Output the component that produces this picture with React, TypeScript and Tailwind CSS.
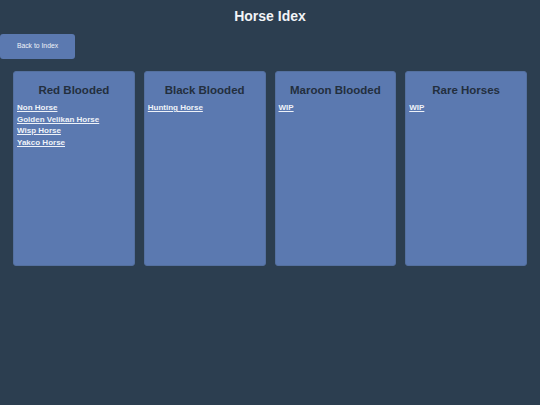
import React from 'react';

const groups = [
  { title: 'Red Blooded', links: ['Non Horse', 'Golden Velikan Horse', 'Wisp Horse', 'Yakco Horse'] },
  { title: 'Black Blooded', links: ['Hunting Horse'] },
  { title: 'Maroon Blooded', links: ['WIP'] },
  { title: 'Rare Horses', links: ['WIP'] },
];

export default function App() {
  return (
    <div className="min-h-[405px] w-full bg-[#2c3e50] font-['Liberation_Sans',Arial,sans-serif]">
      <h1 className="pt-[8px] text-center text-[14px] font-bold leading-[17px] text-[#f2f4f7]">Horse Idex</h1>

      <button className="mt-[9px] block h-[25px] w-[75px] rounded-[3px] bg-[#5b79b0] text-[6.8px] text-[#eef2f8]">
        Back to Index
      </button>

      {/* Categories */}
      <div className="mt-[12px] flex gap-[9px] px-[13px]">
        {groups.map((g) => (
          <section
            key={g.title}
            className="h-[195px] flex-1 rounded-[3px] border border-[#54709f] bg-[#5b79b0] px-[3px]"
          >
            <h2 className="pt-[11px] text-center text-[11.5px] font-bold leading-[14px] text-[#232f3e]">
              {g.title}
            </h2>
            <ul className="mt-[5px] flex flex-col">
              {g.links.map((l) => (
                <li key={l} className="text-[8px] leading-[11.5px]">
                  <a href="#" className="font-bold text-[#eef2f8] underline">
                    {l}
                  </a>
                </li>
              ))}
            </ul>
          </section>
        ))}
      </div>
    </div>
  );
}
